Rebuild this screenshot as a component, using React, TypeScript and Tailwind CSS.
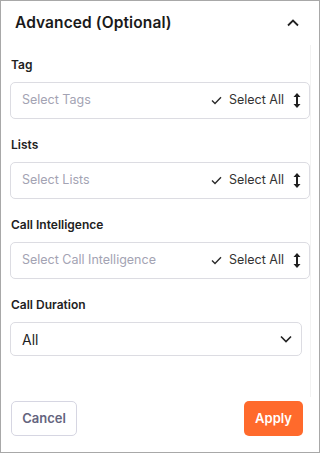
import React from "react";

function UpDown() {
  return (
    <svg width="8" height="15" viewBox="0 0 8 15" className="shrink-0">
      <path d="M4 0 L7.5 4 L5 4 L5 11 L7.5 11 L4 15 L0.5 11 L3 11 L3 4 L0.5 4 Z" fill="#1f1f1f" />
    </svg>
  );
}

function Check() {
  return (
    <svg width="11" height="9" viewBox="0 0 11 9" className="shrink-0">
      <path d="M1 4.5 L4 7.5 L10 1.2" fill="none" stroke="#2a2a2a" strokeWidth="1.4" />
    </svg>
  );
}

function MultiField({ label, placeholder }: { label: string; placeholder: string }) {
  return (
    <div className="flex flex-col">
      <div className="h-[16px] leading-[16px] text-[12px] font-semibold text-[#222] pl-[1px]">{label}</div>
      <div className="mt-[9px] h-[37px] w-[300px] border border-[#dcdce2] rounded-[5px] flex items-center pl-[11px] pr-[8px]">
        <span className="flex-1 text-[12.5px] text-[#a3a3b3]">{placeholder}</span>
        <span className="flex items-center gap-[7px] text-[12.5px] text-[#333] mr-[9px]">
          <Check />
          Select All
        </span>
        <UpDown />
      </div>
    </div>
  );
}

export default function App() {
  return (
    <div
      className="w-[320px] h-[453px] bg-white border border-[#a8a8a8] flex flex-col"
      style={{ fontFamily: "Inter, 'Noto Sans', sans-serif" }}
    >
      <div className="h-[44px] shrink-0 flex items-center justify-between pl-[14px] pr-[20px]">
        <span className="text-[15.5px] font-semibold text-[#1a1a1a] tracking-[0.1px]">Advanced (Optional)</span>
        <svg width="12" height="8" viewBox="0 0 12 8">
          <path d="M1 6.5 L6 1.5 L11 6.5" fill="none" stroke="#222" strokeWidth="1.8" />
        </svg>
      </div>
      <div className="h-[352px] shrink-0 w-[310px] border-r border-[#f2f2f2] pl-[9px] pt-[12px] flex flex-col gap-[18px]">
        <MultiField label="Tag" placeholder="Select Tags" />
        <MultiField label="Lists" placeholder="Select Lists" />
        <MultiField label="Call Intelligence" placeholder="Select Call Intelligence" />
        <div className="flex flex-col">
          <div className="h-[16px] leading-[16px] text-[12px] font-semibold text-[#222] pl-[1px]">Call Duration</div>
          <div className="mt-[9px] h-[34px] w-[292px] border border-[#dcdce2] rounded-[5px] flex items-center justify-between pl-[11px] pr-[9px]">
            <span className="text-[14px] text-[#1f1f1f]">All</span>
            <svg width="12" height="8" viewBox="0 0 12 8">
              <path d="M1 1.5 L6 6.5 L11 1.5" fill="none" stroke="#222" strokeWidth="1.6" />
            </svg>
          </div>
        </div>
      </div>
      <div className="flex-1 flex items-start justify-between pl-[10px] pr-[16px] pt-[4px]">
        <button className="h-[35px] w-[66px] border border-[#d6d6e2] rounded-[5px] text-[13px] font-semibold text-[#64647e]">
          Cancel
        </button>
        <button className="h-[35px] w-[59px] rounded-[5px] bg-[#ff6a2c] text-[13px] font-semibold text-white">
          Apply
        </button>
      </div>
    </div>
  );
}
